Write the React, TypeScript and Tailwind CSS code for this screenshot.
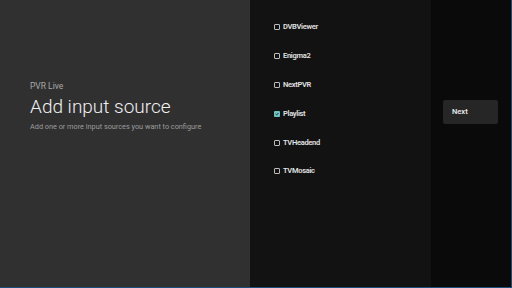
import React from 'react';

const sources = [
  { name: 'DVBViewer', checked: false },
  { name: 'Enigma2', checked: false },
  { name: 'NextPVR', checked: false },
  { name: 'Playlist', checked: true },
  { name: 'TVHeadend', checked: false },
  { name: 'TVMosaic', checked: false },
];

const App: React.FC = () => {
  return (
    <div
      className="w-[512px] h-[288px] flex border-r border-b border-[#1b4e78] overflow-hidden"
      style={{ fontFamily: 'Roboto, "Liberation Sans", sans-serif' }}
    >
      {/* Guidance */}
      <div className="w-[250px] h-full bg-[#303030] flex flex-col pt-[80px] pl-[30px]">
        <div className="text-[8.5px] leading-[12px] text-[#a8a8a8]">PVR Live</div>
        <div className="text-[19px] leading-[24px] text-[#f0f0f0] font-light mt-[3px]">
          Add input source
        </div>
        <div className="text-[7.3px] leading-[10px] text-[#9c9c9c] mt-[3px]">
          Add one or more input sources you want to configure
        </div>
      </div>

      {/* Options */}
      <div className="w-[181px] h-full bg-[#121212] pt-[13px] pl-[24px]">
        {sources.map((s) => (
          <div key={s.name} className="h-[28.8px] flex items-center gap-[3px]">
            {s.checked ? (
              <div className="w-[6px] h-[6px] rounded-[1px] bg-[#6cc3bf] flex items-center justify-center">
                <svg width="4" height="4" viewBox="0 0 4 4">
                  <path d="M0.6 2.1 L1.6 3 L3.4 1" stroke="#121212" strokeWidth="0.8" fill="none" />
                </svg>
              </div>
            ) : (
              <div className="w-[6px] h-[6px] rounded-[1px] border border-[#bdbdbd]" />
            )}
            <span className="text-[7.5px] leading-[10px] font-semibold tracking-[-0.3px] text-[#e2e2e2]">
              {s.name}
            </span>
          </div>
        ))}
      </div>

      {/* Actions */}
      <div className="flex-1 h-full bg-[#0a0a0a] pt-[100px] pl-[12px]">
        <div className="w-[55px] h-[24px] rounded-[2px] bg-[#262626] flex items-center pl-[9px]">
          <span className="text-[7.5px] font-semibold text-[#e6e6e6]">Next</span>
        </div>
      </div>
    </div>
  );
};

export default App;
